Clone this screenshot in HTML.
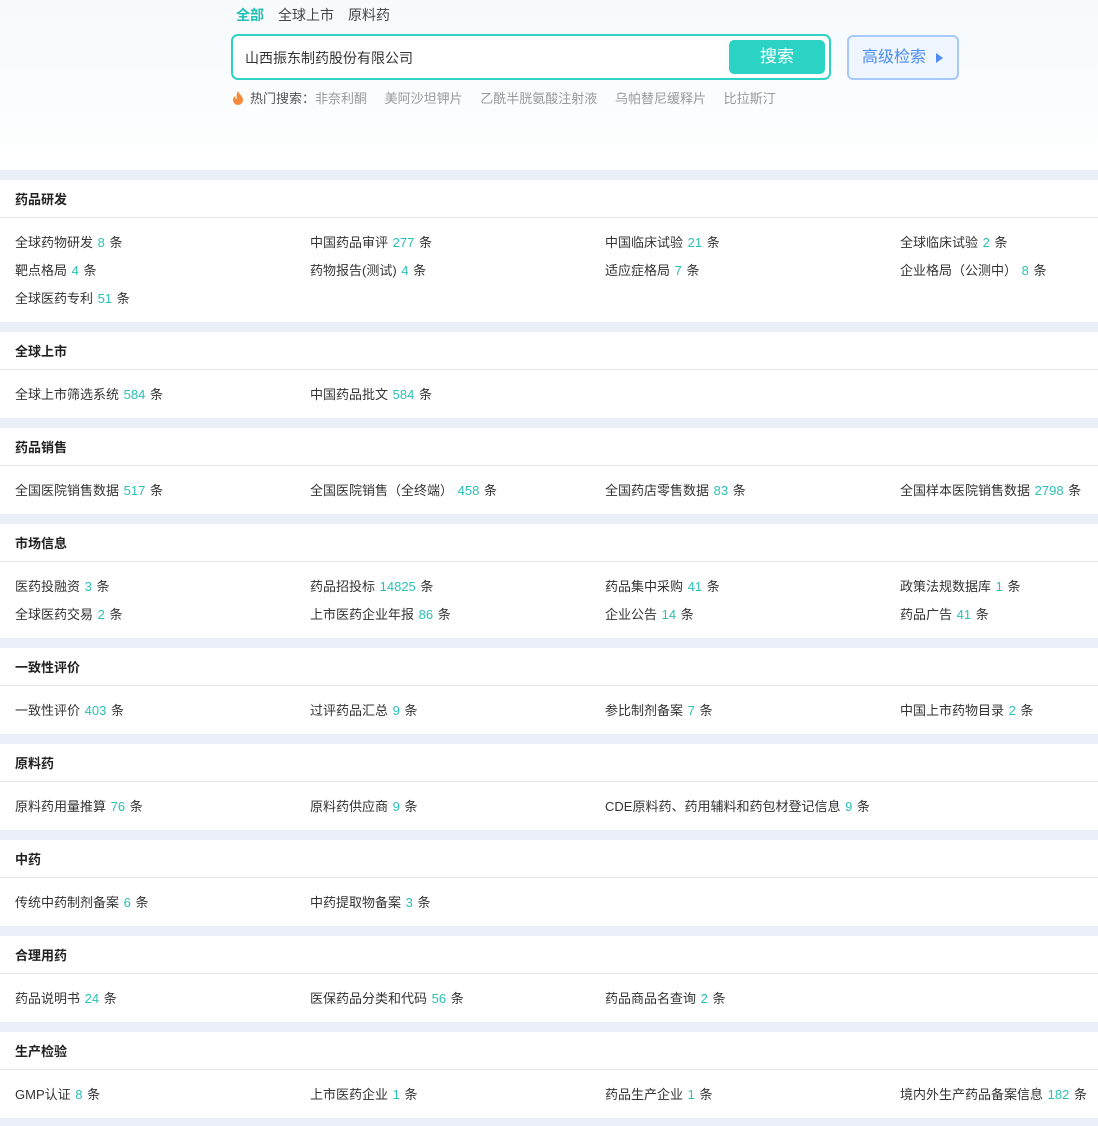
<!DOCTYPE html>
<html><head><meta charset="utf-8"><style>
*{margin:0;padding:0;box-sizing:border-box}
body{width:1098px;height:1126px;overflow:hidden;background:#ebeff7;font-family:"Liberation Sans","Noto Sans CJK SC",sans-serif;font-size:13px;color:#333}
.top{position:relative;height:170px;background:linear-gradient(180deg,#f7fafc 0%,#fbfdfe 70%,#fff 100%)}
.tabs{position:absolute;left:236px;top:6px;font-size:14px;line-height:18px;color:#444}
.tabs span{margin-right:14px}
.tabs .on{color:#21c2b4;font-weight:bold}
.box{position:absolute;left:231px;top:34px;width:600px;height:46px;border:2px solid #2ed3c6;border-radius:7px;background:#fff}
.box .q{position:absolute;left:12px;top:13px;font-size:14px;line-height:18px;color:#333}
.box .btn{position:absolute;left:496px;top:4px;width:96px;height:34px;background:#2bd3c5;border-radius:5px;color:#fff;font-size:17px;text-align:center;line-height:34px}
.adv{position:absolute;left:847px;top:35px;width:112px;height:45px;border:2px solid #a9c9fb;border-radius:6px;background:#f0f6ff;color:#4b8df0;font-size:16px;line-height:41px;padding-left:13px}
.adv i{position:absolute;left:87px;top:16px;width:0;height:0;border-left:7px solid #4b8df0;border-top:5px solid transparent;border-bottom:5px solid transparent}
.hot{position:absolute;left:232px;top:90px;font-size:13px;line-height:18px;color:#999}
.hot b{font-weight:normal;color:#555;margin-left:6px}
.hot span{margin-right:14px}
.sec{background:#fff;margin-top:10px}
.sec h3{height:38px;line-height:39px;border-bottom:1px solid #e6e6e6;padding-left:15px;font-size:13px;font-weight:bold;color:#222}
.items{padding:10px 0 10px 15px;display:grid;grid-template-columns:295px 295px 295px 1fr}
.items div{height:28px;line-height:30px;white-space:nowrap}
.items em{font-style:normal;color:#2bc0b5;margin:0 1px}
</style></head><body>
<div class="top">
<div class="tabs"><span class="on">全部</span><span>全球上市</span><span>原料药</span></div>
<div class="box"><div class="q">山西振东制药股份有限公司</div><div class="btn">搜索</div></div>
<div class="adv">高级检索<i></i></div>
<div class="hot"><svg width="12" height="14" viewBox="0 0 12 14" style="vertical-align:-2px"><path d="M6 0C7 3 11 5 11 9a5 5 0 0 1-10 0c0-2 1-3 2-4 0 2 1 3 2 3C4 5 5 2 6 0z" fill="#f58a3a"/></svg><b>热门搜索：</b><span>非奈利酮</span> <span>美阿沙坦钾片</span> <span>乙酰半胱氨酸注射液</span> <span>乌帕替尼缓释片</span> <span>比拉斯汀</span></div>
</div>
<div class="sec"><h3>药品研发</h3><div class="items">
<div>全球药物研发 <em>8</em> 条</div><div>中国药品审评 <em>277</em> 条</div><div>中国临床试验 <em>21</em> 条</div><div>全球临床试验 <em>2</em> 条</div>
<div>靶点格局 <em>4</em> 条</div><div>药物报告(测试) <em>4</em> 条</div><div>适应症格局 <em>7</em> 条</div><div>企业格局（公测中） <em>8</em> 条</div>
<div>全球医药专利 <em>51</em> 条</div></div></div>
<div class="sec"><h3>全球上市</h3><div class="items">
<div>全球上市筛选系统 <em>584</em> 条</div><div>中国药品批文 <em>584</em> 条</div></div></div>
<div class="sec"><h3>药品销售</h3><div class="items">
<div>全国医院销售数据 <em>517</em> 条</div><div>全国医院销售（全终端） <em>458</em> 条</div><div>全国药店零售数据 <em>83</em> 条</div><div>全国样本医院销售数据 <em>2798</em> 条</div></div></div>
<div class="sec"><h3>市场信息</h3><div class="items">
<div>医药投融资 <em>3</em> 条</div><div>药品招投标 <em>14825</em> 条</div><div>药品集中采购 <em>41</em> 条</div><div>政策法规数据库 <em>1</em> 条</div>
<div>全球医药交易 <em>2</em> 条</div><div>上市医药企业年报 <em>86</em> 条</div><div>企业公告 <em>14</em> 条</div><div>药品广告 <em>41</em> 条</div></div></div>
<div class="sec"><h3>一致性评价</h3><div class="items">
<div>一致性评价 <em>403</em> 条</div><div>过评药品汇总 <em>9</em> 条</div><div>参比制剂备案 <em>7</em> 条</div><div>中国上市药物目录 <em>2</em> 条</div></div></div>
<div class="sec"><h3>原料药</h3><div class="items">
<div>原料药用量推算 <em>76</em> 条</div><div>原料药供应商 <em>9</em> 条</div><div>CDE原料药、药用辅料和药包材登记信息 <em>9</em> 条</div></div></div>
<div class="sec"><h3>中药</h3><div class="items">
<div>传统中药制剂备案 <em>6</em> 条</div><div>中药提取物备案 <em>3</em> 条</div></div></div>
<div class="sec"><h3>合理用药</h3><div class="items">
<div>药品说明书 <em>24</em> 条</div><div>医保药品分类和代码 <em>56</em> 条</div><div>药品商品名查询 <em>2</em> 条</div></div></div>
<div class="sec"><h3>生产检验</h3><div class="items">
<div>GMP认证 <em>8</em> 条</div><div>上市医药企业 <em>1</em> 条</div><div>药品生产企业 <em>1</em> 条</div><div>境内外生产药品备案信息 <em>182</em> 条</div></div></div>
</body></html>
